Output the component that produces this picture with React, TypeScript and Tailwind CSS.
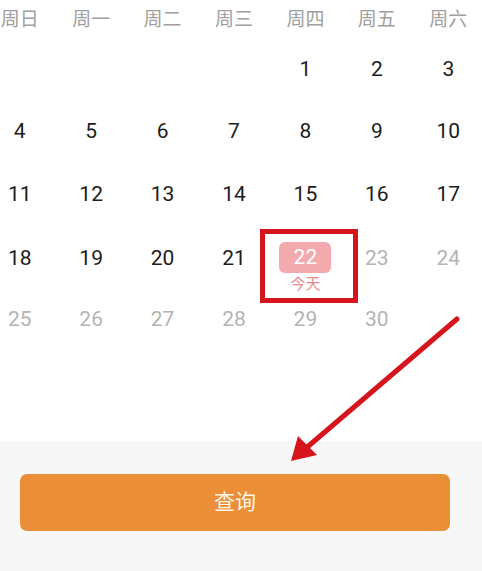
import React from "react";

const weeks = ["周日", "周一", "周二", "周三", "周四", "周五", "周六"];

type Cell = { d: number; muted?: boolean; today?: boolean } | null;

const rows: Cell[][] = [
  [null, null, null, null, { d: 1 }, { d: 2 }, { d: 3 }],
  [{ d: 4 }, { d: 5 }, { d: 6 }, { d: 7 }, { d: 8 }, { d: 9 }, { d: 10 }],
  [{ d: 11 }, { d: 12 }, { d: 13 }, { d: 14 }, { d: 15 }, { d: 16 }, { d: 17 }],
  [{ d: 18 }, { d: 19 }, { d: 20 }, { d: 21 }, { d: 22, today: true }, { d: 23, muted: true }, { d: 24, muted: true }],
  [{ d: 25, muted: true }, { d: 26, muted: true }, { d: 27, muted: true }, { d: 28, muted: true }, { d: 29, muted: true }, { d: 30, muted: true }, null],
];

export default function App() {
  return (
    <div
      className="relative w-[482px] h-[571px] overflow-hidden bg-white flex flex-col"
      style={{ fontFamily: '"Roboto", "Noto Sans CJK SC", sans-serif' }}
    >
      <div className="ml-[-16px] w-[500px]">
        <div className="grid grid-cols-7 h-[38px] items-center">
          {weeks.map((w) => (
            <div key={w} className="text-center text-[19px] text-[#a0a0a0] leading-none">
              {w}
            </div>
          ))}
        </div>
        {rows.map((r, i) => (
          <div key={i} className="grid grid-cols-7 h-[62.5px]">
            {r.map((c, j) =>
              c && c.today ? (
                <div key={j} className="flex flex-col items-center pt-[16px]">
                  <div className="w-[52px] h-[31px] rounded-[6px] bg-[#f2aaae] text-white text-[21px] flex items-center justify-center leading-none">
                    {c.d}
                  </div>
                  <div className="text-[15px] text-[#e98a8f] leading-none mt-[4px]">今天</div>
                </div>
              ) : (
                <div key={j} className="flex items-center justify-center">
                  {c ? (
                    <div className={`text-[21px] leading-none ${c.muted ? "text-[#b4b4b4]" : "text-[#1c1c1c]"}`}>
                      {c.d}
                    </div>
                  ) : null}
                </div>
              )
            )}
          </div>
        ))}
      </div>
      <div className="flex-1" />
      <div className="h-[130px] bg-[#f7f7f7] pt-[33px] px-[20px]">
        <div className="w-[430px] h-[57px] rounded-[7px] bg-[#ea8f37] flex items-center justify-center text-[21px] text-[#fff4e6]">
          查询
        </div>
      </div>

      {/* annotation box */}
      <div className="absolute left-[260px] top-[229px] w-[98px] h-[74px] border-[5px] border-[#d6141c]" />

      {/* annotation arrow */}
      <svg className="absolute left-0 top-0" width="482" height="571" viewBox="0 0 482 571">
        <line x1="457" y1="319" x2="305" y2="449" stroke="#d6141c" strokeWidth="5" strokeLinecap="round" />
        <polygon points="291,461 298,436 317,455" fill="#d6141c" />
      </svg>
    </div>
  );
}
